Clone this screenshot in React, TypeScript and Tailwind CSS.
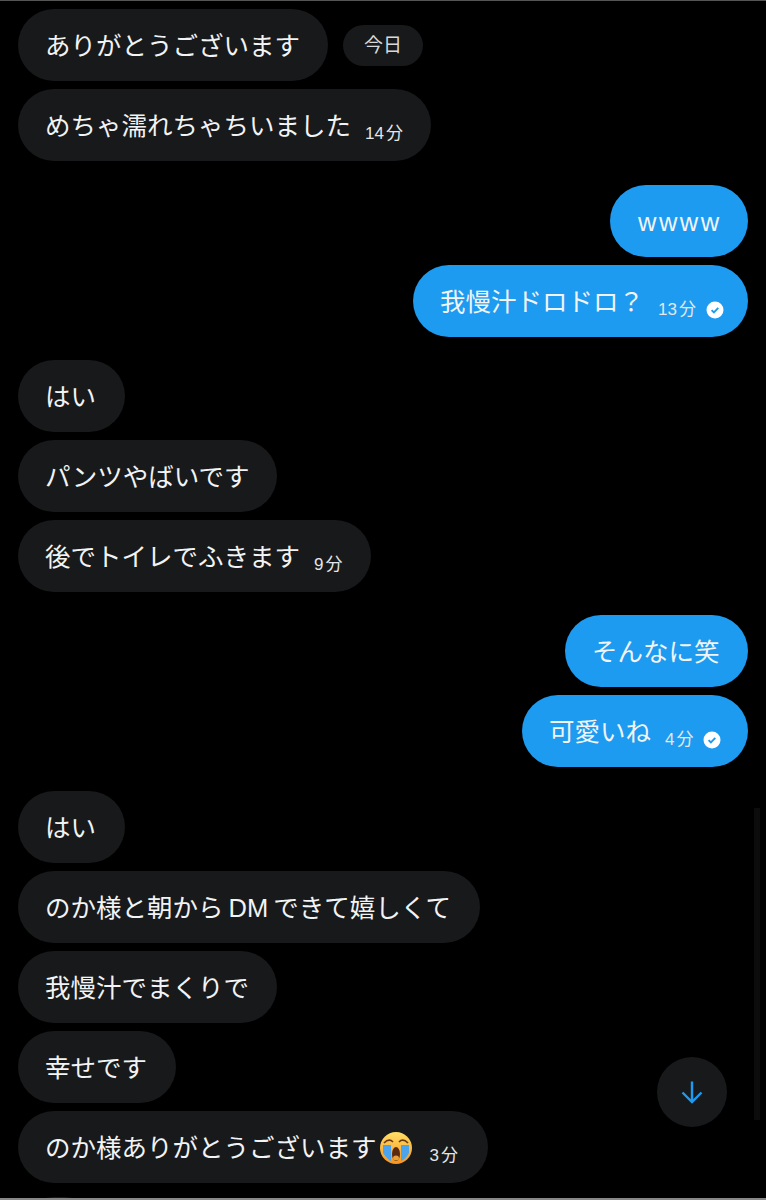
const sans = "font-['Liberation_Sans','Noto_Sans_CJK_JP',sans-serif]";

type Msg = {
  text: string;
  time?: string;
  width: string;
  emoji?: boolean;
  wide?: boolean;
};

type Block = {
  mine: boolean;
  margin: string;
  messages: Msg[];
};

const blocks: Block[] = [
  {
    mine: true,
    margin: "mt-[24px]",
    messages: [
      { text: "wwww", width: "w-[138px]", wide: true },
      { text: "我慢汁ドロドロ？", time: "13分", width: "w-[335px]" },
    ],
  },
  {
    mine: false,
    margin: "mt-[23px]",
    messages: [
      { text: "はい", width: "w-[107px]" },
      { text: "パンツやばいです", width: "w-[259px]" },
      { text: "後でトイレでふきます", time: "9分", width: "w-[353px]" },
    ],
  },
  {
    mine: true,
    margin: "mt-[23px]",
    messages: [
      { text: "そんなに笑", width: "w-[183px]" },
      { text: "可愛いね", time: "4分", width: "w-[226px]" },
    ],
  },
  {
    mine: false,
    margin: "mt-[24px]",
    messages: [
      { text: "はい", width: "w-[107px]" },
      { text: "のか様と朝から\u2009DM\u2009できて嬉しくて", width: "w-[462px]" },
      { text: "我慢汁でまくりで", width: "w-[259px]" },
      { text: "幸せです", width: "w-[158px]" },
      { text: "のか様ありがとうございます", time: "3分", width: "w-[470px]", emoji: true },
    ],
  },
];

function SeenIcon() {
  return (
    <svg width="18" height="18" viewBox="0 0 18 18" className="ml-[10px] shrink-0">
      <circle cx="9" cy="9" r="8.5" fill="#fff" />
      <path d="M5.6 9.2l2.3 2.3 4.4-4.6" fill="none" stroke="#1d9bf0" strokeWidth="1.9" />
    </svg>
  );
}

function CryingEmoji() {
  return (
    <svg width="34" height="34" viewBox="0 0 34 34" className="ml-[2px] mt-[2px] shrink-0">
      <defs>
        <linearGradient id="face" x1="0" y1="0" x2="0" y2="1">
          <stop offset="0" stopColor="#ffdf66" />
          <stop offset="1" stopColor="#f7941e" />
        </linearGradient>
      </defs>
      <circle cx="17" cy="17" r="16" fill="url(#face)" />
      <path d="M5 12q5-5 9-1M20 11q4-4 9 1" fill="none" stroke="#6b3a10" strokeWidth="1.7" />
      <path d="M4 14h8v16q-4-2-8-8zM22 14h8v8q-3 6-8 8z" fill="#4aa5ee" />
      <ellipse cx="17" cy="23" rx="4" ry="7" fill="#5a2a12" />
      <ellipse cx="17" cy="27" rx="3" ry="2.5" fill="#e8a23c" />
    </svg>
  );
}

function Bubble({ msg, mine }: { msg: Msg; mine: boolean }) {
  return (
    <div
      className={`flex h-[72px] items-center rounded-[36px] pl-[27px] ${msg.width} ${
        mine ? "bg-[#1d9bf0]" : "bg-[#18191b]"
      }`}
    >
      <span
        className={`whitespace-nowrap pt-[1px] text-[25.5px] leading-[32px] text-[#f2f3f4] ${
          msg.wide ? "pl-[1px] tracking-[2.5px]" : ""
        }`}
      >
        {msg.text}
      </span>
      {msg.emoji && <CryingEmoji />}
      {msg.time && (
        <span
          className={`mt-[18px] flex items-center whitespace-nowrap text-[17px] leading-[20px] text-[#e4e6e8] ${
            msg.emoji ? "ml-[17px]" : "ml-[14px]"
          }`}
        >
          {msg.time.slice(0, -1)}
          <span className="ml-[2px]">分</span>
          {mine && <SeenIcon />}
        </span>
      )}
    </div>
  );
}

export default function App() {
  return (
    <div className={`relative h-[1200px] w-[766px] overflow-hidden bg-black pt-[9px] ${sans}`}>
      <div className="absolute inset-x-0 top-0 h-[1px] bg-[#555555]" />

      <div className="flex flex-col gap-[8px] px-[18px]">
        <div className="flex items-center gap-[15px]">
          <Bubble msg={{ text: "ありがとうございます", width: "w-[310px]" }} mine={false} />
          <span className="rounded-[21px] bg-[#18191b] px-[21px] py-[10px] text-[19px] leading-[21px] text-[#d6d8da]">
            今日
          </span>
        </div>
        <Bubble msg={{ text: "めちゃ濡れちゃちいました", time: "14分", width: "w-[413px]" }} mine={false} />
      </div>

      {blocks.map((block, i) => (
        <div
          key={i}
          className={`flex flex-col gap-[8px] px-[18px] ${block.margin} ${block.mine ? "items-end" : "items-start"}`}
        >
          {block.messages.map((msg) => (
            <Bubble key={msg.text + i} msg={msg} mine={block.mine} />
          ))}
        </div>
      ))}

      {/* next bubble just peeking in at the bottom edge */}
      <div className="ml-[18px] mt-[14px] h-[72px] w-[82px] rounded-[36px] bg-[#18191b]" />

      {/* scrollbar */}
      <div className="absolute left-[754px] top-[808px] h-[312px] w-[6px] bg-[#0c0c0c]" />

      <div className="absolute left-[657px] top-[1057px] flex h-[70px] w-[70px] items-center justify-center rounded-full bg-[#18191b]">
        <svg width="24" height="24" viewBox="0 0 24 24" fill="none" stroke="#1d9bf0" strokeWidth="2.4">
          <path d="M12 1.5v20M2.5 12.5l9.5 9.5 9.5-9.5" />
        </svg>
      </div>

      <div className="absolute inset-x-0 bottom-0 h-[2px] bg-[#888888]" />
    </div>
  );
}
